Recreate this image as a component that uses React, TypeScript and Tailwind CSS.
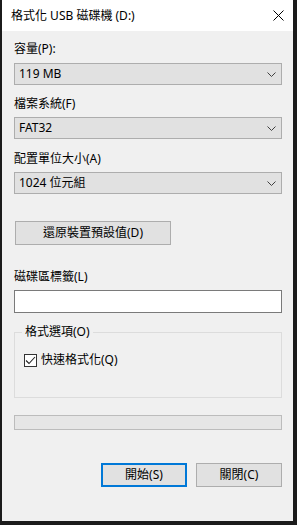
const font = "font-['Noto_Sans','Noto_Sans_CJK_TC',sans-serif]";

function Chevron() {
  return (
    <svg width="9" height="5" viewBox="0 0 9 5" className="shrink-0">
      <path d="M0.5 0.5 L4.5 4.5 L8.5 0.5" fill="none" stroke="#404040" strokeWidth="1" />
    </svg>
  );
}

function Combo({ value }: { value: string }) {
  return (
    <div className="flex h-[22px] items-center justify-between border border-[#adadad] bg-[#e1e1e1] pl-[4px] pr-[5px] text-[12px] leading-none text-black">
      <span>{value}</span>
      <Chevron />
    </div>
  );
}

function Label({ text, className = "" }: { text: string; className?: string }) {
  return <div className={`h-[16px] text-[12px] leading-[16px] text-black ${className}`}>{text}</div>;
}

export default function App() {
  return (
    <div className={`flex h-[525px] w-[297px] bg-[#1b1b1b] ${font}`}>
      <div className="ml-[2px] flex h-[521px] w-[291px] flex-col bg-[#f0f0f0]">
        {/* title bar */}
        <div className="flex h-[31px] items-center justify-between bg-white pl-[9px] pr-[9px]">
          <span className="text-[12px] leading-none text-black">格式化 USB 磁碟機 (D:)</span>
          <svg width="11" height="11" viewBox="0 0 11 11">
            <path d="M0.5 0.5 L10.5 10.5 M10.5 0.5 L0.5 10.5" stroke="#000" strokeWidth="1" />
          </svg>
        </div>

        <div className="flex flex-col pl-[12px] pr-[11px]">
          <Label text="容量(P):" className="mt-[10px]" />
          <div className="mt-[6px]">
            <Combo value="119 MB" />
          </div>

          <Label text="檔案系統(F)" className="mt-[11px]" />
          <div className="mt-[5px]">
            <Combo value="FAT32" />
          </div>

          <Label text="配置單位大小(A)" className="mt-[12px]" />
          <div className="mt-[5px]">
            <Combo value="1024 位元組" />
          </div>

          <div className="ml-[1px] mt-[27px] flex h-[24px] w-[156px] items-center justify-center border border-[#adadad] bg-[#e1e1e1] text-[12px] leading-none text-black">
            還原裝置預設值(D)
          </div>

          <Label text="磁碟區標籤(L)" className="mt-[24px]" />
          <div className="mt-[5px] h-[23px] border border-[#7a7a7a] bg-white" />

          {/* group box */}
          <div className="relative mt-[19px] h-[66px] border border-[#dcdcdc]">
            <span className="absolute -top-[9px] left-[7px] bg-[#f0f0f0] px-[3px] text-[12px] leading-[16px] text-black">
              格式選項(O)
            </span>
            <div className="ml-[9px] mt-[19px] flex items-center gap-[4px]">
              <div className="flex h-[13px] w-[13px] items-center justify-center border border-[#333333] bg-white">
                <svg width="11" height="9" viewBox="0 0 11 9">
                  <path d="M1 4.5 L4 7.5 L10 1" fill="none" stroke="#222" strokeWidth="1.1" />
                </svg>
              </div>
              <span className="text-[12px] leading-[16px] text-black">快速格式化(Q)</span>
            </div>
          </div>

          <div className="mt-[17px] h-[15px] border border-[#bcbcbc] bg-[#e6e6e6]" />

          <div className="mt-[33px] flex justify-end gap-[9px]">
            <div className="flex h-[24px] w-[86px] items-center justify-center border-2 border-[#0078d7] bg-[#e1e1e1] text-[12px] leading-none text-black">
              開始(S)
            </div>
            <div className="flex h-[24px] w-[86px] items-center justify-center border border-[#adadad] bg-[#e1e1e1] text-[12px] leading-none text-black">
              關閉(C)
            </div>
          </div>
        </div>
      </div>
    </div>
  );
}
